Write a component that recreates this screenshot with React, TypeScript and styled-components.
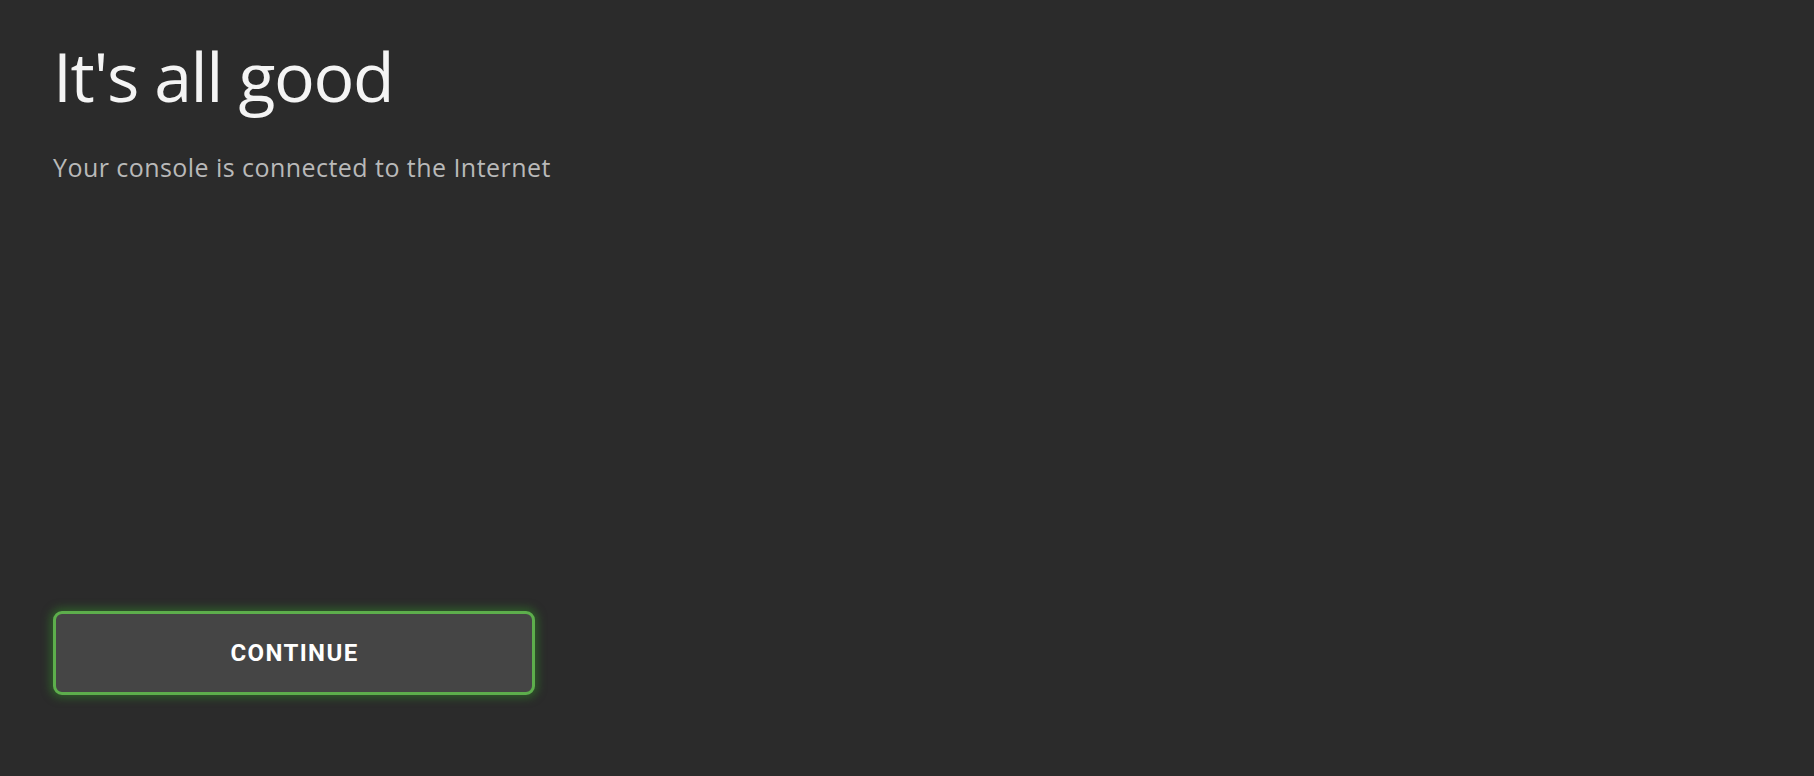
import React from "react";
import styled, { createGlobalStyle } from "styled-components";

const GlobalStyle = createGlobalStyle`
  html, body {
    margin: 0;
    padding: 0;
    background: #2b2b2b;
  }
  * { box-sizing: border-box; }
`;

const Page = styled.main`
  width: 1814px;
  height: 776px;
  background: #2b2b2b;
  display: flex;
  flex-direction: column;
  align-items: flex-start;
  padding: 42px 0 0 53px;
  font-family: "Open Sans", "Noto Sans", sans-serif;
`;

const Title = styled.h1`
  margin: 0;
  font-size: 68px;
  line-height: 68px;
  font-weight: 400;
  color: #f4f4f4;
  letter-spacing: -1.4px;
`;

const Subtitle = styled.p`
  margin: 45px 0 0 0;
  font-size: 25px;
  line-height: 25px;
  font-weight: 400;
  color: #b9b9b9;
  letter-spacing: 0.45px;
`;

const Button = styled.button`
  margin-top: 431px;
  width: 482px;
  height: 84px;
  border: 3px solid #5dae4c;
  border-radius: 9px;
  background: #454545;
  box-shadow: 0 0 9px 3px rgba(50, 130, 40, 0.55);
  color: #ffffff;
  font-family: "Roboto", "Noto Sans", sans-serif;
  font-weight: 700;
  font-size: 24px;
  letter-spacing: 1.4px;
  display: flex;
  align-items: center;
  justify-content: center;
  padding: 0 0 0 1px;
  cursor: pointer;
`;

export default function App() {
  return (
    <>
      <GlobalStyle />
      <Page>
        <Title>It's all good</Title>
        <Subtitle>Your console is connected to the Internet</Subtitle>
        <Button>CONTINUE</Button>
      </Page>
    </>
  );
}
